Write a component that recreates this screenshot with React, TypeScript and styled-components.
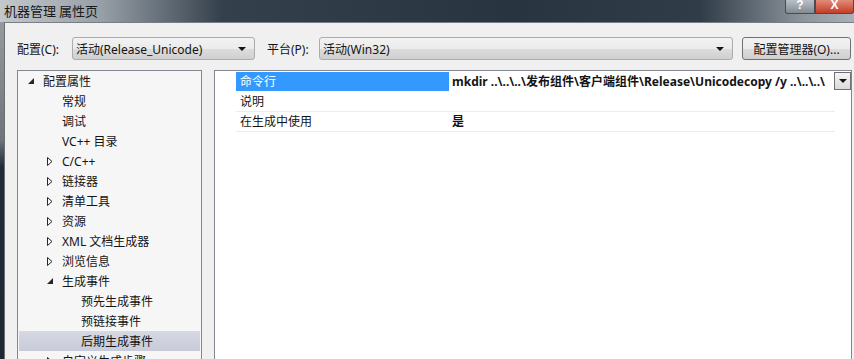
import React from 'react';
import styled, { createGlobalStyle } from 'styled-components';

const GlobalStyle = createGlobalStyle`
    html, body {
        margin: 0;
        padding: 0;
        overflow: hidden;
    }
    body {
        font-family: "Noto Sans", "Noto Sans CJK SC", sans-serif;
        font-size: 12px;
        color: rgb(20, 20, 20);
    }
`;

const Window = styled('div')`
    width: 854px;
    height: 359px;
    display: flex;
    flex-direction: column;
    overflow: hidden;
`;

const TitleBar = styled('div')`
    height: 22px;
    flex: none;
    display: flex;
    align-items: flex-start;
    justify-content: space-between;
    background: linear-gradient(90deg, rgb(196, 200, 204) 0%, rgb(150, 158, 166) 12%, rgb(52, 64, 76) 26%, rgb(40, 52, 64) 60%, rgb(48, 60, 72) 82%, rgb(140, 148, 156) 94%, rgb(170, 176, 182) 100%);
`;

const TitleText = styled('span')`
    font-family: "Noto Sans CJK SC", sans-serif;
    font-size: 13px;
    line-height: 21px;
    padding-left: 4px;
    color: rgb(24, 24, 24);
`;

const CaptionButtons = styled('div')`
    display: flex;
`;

const CaptionButton = styled('div')<{ close?: boolean }>`
    height: 13px;
    width: ${(p) => (p.close ? '37px' : '28px')};
    border: solid 1px rgb(70, 76, 84);
    border-top: none;
    border-radius: ${(p) => (p.close ? '0 0 3px 0' : '0 0 0 3px')};
    background: ${(p) =>
        p.close
            ? 'linear-gradient(180deg, rgb(226, 140, 120), rgb(196, 60, 40))'
            : 'linear-gradient(180deg, rgb(186, 192, 198), rgb(130, 138, 146))'};
    color: rgb(255, 255, 255);
    font-family: "Liberation Sans", sans-serif;
    font-weight: bold;
    font-size: 12px;
    line-height: 10px;
    text-align: center;
    overflow: hidden;
`;

const Body = styled('div')`
    flex: 1;
    display: flex;
    min-height: 0;
`;

const FrameEdge = styled('div')`
    width: 4px;
    flex: none;
    background: linear-gradient(180deg, rgb(150, 154, 158) 0%, rgb(110, 116, 122) 35%, rgb(30, 44, 58) 43%, rgb(28, 40, 52) 100%);
`;

const Content = styled('div')`
    flex: 1;
    display: flex;
    flex-direction: column;
    gap: 10px;
    padding: 14px 2px 0 12px;
    background-color: rgb(240, 240, 240);
    border-left: solid 1px rgb(110, 110, 110);
    border-top: solid 1px rgb(120, 126, 132);
    min-height: 0;
`;

const Toolbar = styled('div')`
    display: flex;
    align-items: center;
    height: 23px;
`;

const Label = styled('span')<{ width: number; gapBefore?: number }>`
    width: ${(p) => p.width}px;
    margin-left: ${(p) => p.gapBefore ?? 0}px;
    flex: none;
    white-space: nowrap;
`;

const Combo = styled('div')<{ width: number }>`
    width: ${(p) => p.width}px;
    height: 23px;
    box-sizing: border-box;
    flex: none;
    display: flex;
    align-items: center;
    justify-content: space-between;
    padding: 0 8px 0 3px;
    border: solid 1px rgb(172, 172, 172);
    border-radius: 3px;
    background: linear-gradient(180deg, rgb(242, 242, 242) 0%, rgb(235, 235, 235) 50%, rgb(221, 221, 221) 51%, rgb(207, 207, 207) 100%);
    white-space: nowrap;
`;

const ComboArrow = styled('span')`
    width: 0;
    height: 0;
    border-left: 4px solid transparent;
    border-right: 4px solid transparent;
    border-top: 4px solid rgb(20, 20, 20);
`;

const ToolButton = styled('div')`
    width: 109px;
    height: 23px;
    box-sizing: border-box;
    margin-left: 9px;
    flex: none;
    display: flex;
    align-items: center;
    justify-content: center;
    border: solid 1px rgb(112, 112, 112);
    border-radius: 3px;
    background: linear-gradient(180deg, rgb(242, 242, 242) 0%, rgb(235, 235, 235) 50%, rgb(221, 221, 221) 51%, rgb(207, 207, 207) 100%);
    white-space: nowrap;
`;

const Panels = styled('div')`
    flex: 1;
    display: flex;
    gap: 12px;
    min-height: 0;
`;

const TreePanel = styled('div')`
    width: 185px;
    flex: none;
    box-sizing: border-box;
    padding: 0 1px 0 1px;
    border: solid 1px rgb(130, 135, 144);
    border-bottom: none;
    background-color: rgb(246, 246, 246);
    overflow: hidden;
`;

const TreeRow = styled('div')<{ level: number; selected?: boolean }>`
    height: 20px;
    display: flex;
    align-items: center;
    padding-left: ${(p) => 9 + p.level * 19}px;
    background: ${(p) =>
        p.selected ? 'linear-gradient(180deg, rgb(214, 216, 226), rgb(200, 203, 216))' : 'transparent'};
    white-space: nowrap;
`;

const Expander = styled('span')`
    width: 15px;
    flex: none;
    display: flex;
    align-items: center;
`;

const PropPanel = styled('div')`
    flex: 1;
    box-sizing: border-box;
    padding: 1px 0 0 21px;
    border: solid 1px rgb(130, 135, 144);
    border-bottom: none;
    background-color: rgb(255, 255, 255);
    overflow: hidden;
`;

const PropRow = styled('div')`
    height: 19px;
    display: grid;
    grid-template-columns: 213px 1fr;
    border-bottom: solid 1px rgb(236, 236, 236);
    margin-right: 16px;
    &:first-child {
        border-bottom-color: transparent;
    }
`;

const PropName = styled('div')<{ active?: boolean }>`
    padding-left: 4px;
    line-height: 19px;
    white-space: nowrap;
    background-color: ${(p) => (p.active ? 'rgb(51, 153, 255)' : 'transparent')};
    color: ${(p) => (p.active ? 'rgb(255, 255, 255)' : 'rgb(20, 20, 20)')};
`;

const PropValue = styled('div')`
    padding-left: 3px;
    line-height: 19px;
    font-weight: bold;
    white-space: nowrap;
    overflow: hidden;
`;

const ValueEditor = styled('div')`
    display: flex;
    margin-right: -16px;
`;

const ValueText = styled('div')`
    flex: 1;
    overflow: hidden;
    padding-left: 3px;
    line-height: 19px;
    font-weight: bold;
    white-space: nowrap;
`;

const DropButton = styled('div')`
    width: 17px;
    height: 18px;
    box-sizing: border-box;
    flex: none;
    display: flex;
    align-items: center;
    justify-content: center;
    border: solid 1px rgb(112, 112, 112);
    background: linear-gradient(180deg, rgb(245, 245, 245), rgb(218, 218, 218));
`;

const Filled = () => (
    <svg width="7" height="7" viewBox="0 0 7 7">
        <polygon points="6,0 6,6 0,6" fill="rgb(38, 38, 38)" />
    </svg>
);

const Outline = () => (
    <svg width="6" height="9" viewBox="0 0 6 9">
        <polygon points="0.5,0.5 5,4.5 0.5,8.5" fill="none" stroke="rgb(38, 38, 38)" strokeWidth="1" />
    </svg>
);

type TreeItem = { text: string; level: number; arrow?: 'open' | 'closed'; selected?: boolean };

const tree: TreeItem[] = [
    { text: '配置属性', level: 0, arrow: 'open' },
    { text: '常规', level: 1 },
    { text: '调试', level: 1 },
    { text: 'VC++ 目录', level: 1 },
    { text: 'C/C++', level: 1, arrow: 'closed' },
    { text: '链接器', level: 1, arrow: 'closed' },
    { text: '清单工具', level: 1, arrow: 'closed' },
    { text: '资源', level: 1, arrow: 'closed' },
    { text: 'XML 文档生成器', level: 1, arrow: 'closed' },
    { text: '浏览信息', level: 1, arrow: 'closed' },
    { text: '生成事件', level: 1, arrow: 'open' },
    { text: '预先生成事件', level: 2 },
    { text: '预链接事件', level: 2 },
    { text: '后期生成事件', level: 2, selected: true },
    { text: '自定义生成步骤', level: 1, arrow: 'closed' }
];

export default function App() {
    return (
        <>
            <GlobalStyle />
            <Window>
                <TitleBar>
                    <TitleText>机器管理 属性页</TitleText>
                    <CaptionButtons>
                        <CaptionButton>?</CaptionButton>
                        <CaptionButton close>X</CaptionButton>
                    </CaptionButtons>
                </TitleBar>
                <Body>
                    <FrameEdge />
                    <Content>
                        <Toolbar>
                            <Label width={55}>配置(C):</Label>
                            <Combo width={183}>
                                <span>活动(Release_Unicode)</span>
                                <ComboArrow />
                            </Combo>
                            <Label width={52} gapBefore={12}>平台(P):</Label>
                            <Combo width={414}>
                                <span>活动(Win32)</span>
                                <ComboArrow />
                            </Combo>
                            <ToolButton>配置管理器(O)...</ToolButton>
                        </Toolbar>
                        <Panels>
                            <TreePanel>
                                {tree.map((item) => (
                                    <TreeRow key={item.text} level={item.level} selected={item.selected}>
                                        <Expander>
                                            {item.arrow === 'open' && <Filled />}
                                            {item.arrow === 'closed' && <Outline />}
                                        </Expander>
                                        {item.text}
                                    </TreeRow>
                                ))}
                            </TreePanel>
                            <PropPanel>
                                <PropRow>
                                    <PropName active>命令行</PropName>
                                    <ValueEditor>
                                        <ValueText>mkdir ..\..\..\发布组件\客户端组件\Release\Unicodecopy /y ..\..\..\</ValueText>
                                        <DropButton>
                                            <ComboArrow />
                                        </DropButton>
                                    </ValueEditor>
                                </PropRow>
                                <PropRow>
                                    <PropName>说明</PropName>
                                    <PropValue />
                                </PropRow>
                                <PropRow>
                                    <PropName>在生成中使用</PropName>
                                    <PropValue>是</PropValue>
                                </PropRow>
                            </PropPanel>
                        </Panels>
                    </Content>
                </Body>
            </Window>
        </>
    );
}
